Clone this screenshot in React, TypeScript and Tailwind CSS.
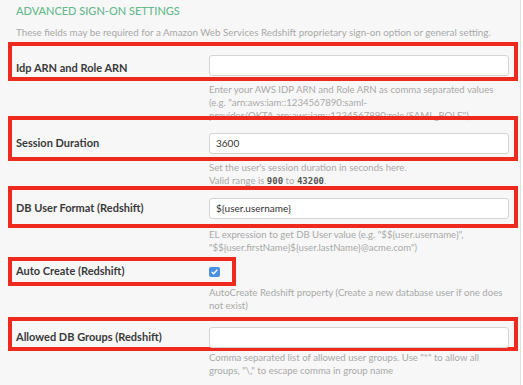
import React from "react";

const font = { fontFamily: "Lato, 'Open Sans', sans-serif" };
const mono = { fontFamily: "'DejaVu Sans Mono', monospace" };

const Input = ({ value }: { value?: string }) => (
  <div className="w-[300px] h-[21px] shrink-0 bg-white border border-[#d4d4d4] rounded-[3px] flex items-center pl-[6px] text-[10px] text-[#333]">
    {value}
  </div>
);

const Help = ({ children, className }: { children: React.ReactNode; className?: string }) => (
  <div className={"pl-[209px] text-[9.6px] leading-[13px] text-[#a9a9a9] whitespace-nowrap " + (className ?? "")}>
    {children}
  </div>
);

const Row = ({ label, children, className }: { label: string; children: React.ReactNode; className?: string }) => (
  <div className={"relative z-10 ml-[8px] border-[4px] border-[#ee2a1e] flex " + (className ?? "")}>
    <div className="w-[197px] shrink-0 pl-[4px] text-[11px] font-bold text-[#3a3a3a]">{label}</div>
    {children}
  </div>
);

export default function App() {
  return (
    <div style={font} className="w-[523px] h-[385px] bg-white overflow-hidden">
      <div className="w-[521px] h-full bg-[#f7f7f7] border-r border-[#e2e2e2] pt-[4px]">
        <div className="pl-[16px] text-[11px] leading-[14px] text-[#66b98a] font-medium">ADVANCED SIGN-ON SETTINGS</div>
        <div className="pl-[16px] mt-[8px] text-[9.8px] leading-[13px] text-[#a9a9a9] whitespace-nowrap">
          These fields may be required for a Amazon Web Services Redshift proprietary sign-on option or general setting.
        </div>

        <Row label="Idp ARN and Role ARN" className="mt-[3px] w-[510px] h-[39px] items-end pb-[1px]">
          <Input />
        </Row>
        <Help className="h-[35px] relative z-0 pt-[2px]">
          <div>Enter your AWS IDP ARN and Role ARN as comma separated values</div>
          <div>(e.g. "arn:aws:iam::1234567890:saml-</div>
          <div>provider/OKTA,arn:aws:iam::1234567890:role/SAML_ROLE")</div>
        </Help>

        <Row label="Session Duration" className="w-[510px] h-[45px] items-center pt-[10px]">
          <Input value="3600" />
        </Row>
        <Help className="h-[25px] relative z-0">
          <div>Set the user's session duration in seconds here.</div>
          <div>
            Valid range is <span className="text-[#555] text-[9px] font-bold" style={mono}>900</span> to{" "}
            <span className="text-[#555] text-[9px] font-bold" style={mono}>43200</span>.
          </div>
        </Help>

        <Row label="DB User Format (Redshift)" className="w-[510px] h-[42px] items-center pt-[3px]">
          <Input value="${user.username}" />
        </Row>
        <Help className="h-[29px] relative z-0">
          <div>EL expression to get DB User value (e.g. "${"${user.username}"}",</div>
          <div>"${"${user.firstName}${user.lastName}"}@acme.com")</div>
        </Help>

        <Row label="Auto Create (Redshift)" className="h-[29px] w-[228px] items-center">
          <div className="w-[11px] h-[10px] rounded-[2px] bg-[#4a90e2] flex items-center justify-center">
            <svg width="7" height="6" viewBox="0 0 7 6" fill="none">
              <path d="M1 3.2 L2.7 4.8 L6 1" stroke="white" strokeWidth="1.3" strokeLinecap="round" strokeLinejoin="round" />
            </svg>
          </div>
        </Row>
        <Help className="h-[31px] relative z-0">
          <div>AutoCreate Redshift property (Create a new database user if one does</div>
          <div>not exist)</div>
        </Help>

        <Row label="Allowed DB Groups (Redshift)" className="w-[510px] h-[34px] items-center pt-[6px]">
          <Input />
        </Row>
        <Help className="relative z-0">
          <div>Comma separated list of allowed user groups. Use "*" to allow all</div>
          <div>groups, "\," to escape comma in group name</div>
        </Help>
      </div>
    </div>
  );
}
